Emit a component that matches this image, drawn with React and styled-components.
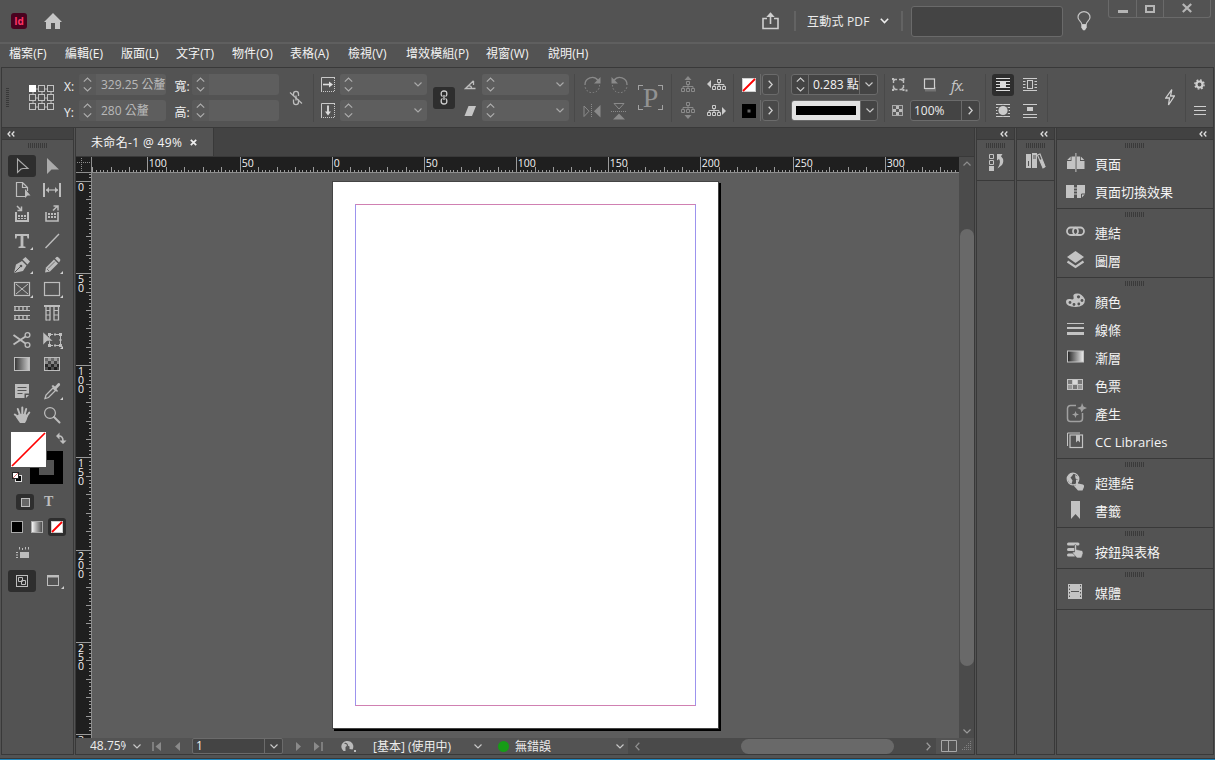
import React from 'react';
import styled, { createGlobalStyle, css } from 'styled-components';

const Global = createGlobalStyle`
  *, *::before, *::after { box-sizing: border-box; }
  body {
    margin: 0;
    background: #535353;
    color: #f0f0f0;
    font-family: 'Open Sans', 'Noto Sans CJK TC', sans-serif;
    font-size: 12px;
    overflow: hidden;
  }
  svg { display: block; flex: none; }
`;

const line = '#393939';

/* ---------- shell ---------- */
const Window = styled.div`
  width: 1215px;
  height: 760px;
  display: flex;
  flex-direction: column;
  background: #535353;
`;
const TitleBar = styled.header`
  height: 44px;
  flex: none;
  display: flex;
  align-items: center;
  padding: 0 3px 0 11px;
  border-bottom: 2px solid #5f5f5f;
`;
const Logo = styled.div`
  width: 16px;
  height: 16px;
  border-radius: 3px;
  background: #49021f;
  color: #ff3366;
  font: 700 10px/16px 'Open Sans', sans-serif;
  text-align: center;
`;
const TitleItem = styled.div`
  margin-left: ${p => p.$gap}px;
`;
const TitleRule = styled.div`
  width: 2px;
  height: 20px;
  background: #636363;
  margin-left: ${p => p.$gap}px;
`;
const Workspace = styled.div`
  width: 64px;
  margin-left: 11px;
  white-space: nowrap;
  font-size: 12px;
  letter-spacing: 0.2px;
  color: #ececec;
`;
const Search = styled.div`
  width: 152px;
  height: 31px;
  margin-left: 8px;
  background: #444;
  border: 1px solid #6a6a6a;
  border-radius: 3px;
`;
const Controls = styled.div`
  align-self: flex-start;
  display: flex;
  width: 103px;
  height: 18px;
  margin-left: 17px;
  border: 1px solid #6a6a6a;
  border-top: 0;
  border-radius: 0 0 3px 3px;
`;
const ControlButton = styled.div`
  width: ${p => p.$w}px;
  display: flex;
  justify-content: center;
  border-right: ${p => (p.$last ? '0' : '1px solid #6a6a6a')};
`;
const MenuBar = styled.nav`
  height: 23px;
  flex: none;
  display: flex;
  padding-left: 9px;
  line-height: 20px;
`;
const MenuItem = styled.div`
  width: ${p => p.$w}px;
  white-space: nowrap;
  letter-spacing: 0.08px;
  color: #f4f4f4;
`;

/* ---------- control strip ---------- */
const Strip = styled.div`
  height: 61px;
  flex: none;
  display: flex;
  margin-left: 1px;
  margin-right: 1px;
  border: 1px solid ${line};
  padding-top: 6px;
`;
const Col = styled.div`
  width: ${p => p.$w}px;
  margin-left: ${p => p.$gap}px;
  padding-top: ${p => p.$down || 0}px;
  height: 47px;
  flex: none;
  display: flex;
  flex-direction: column;
  justify-content: ${p => (p.$mid ? 'center' : 'flex-start')};
  gap: 5px;
`;
const Cell = styled.div`
  height: 21px;
  flex: none;
  display: flex;
  align-items: center;
  justify-content: ${p => p.$align || 'center'};
  white-space: nowrap;
  gap: ${p => p.$gap || 0}px;
`;
const Rule = styled.div`
  width: 1px;
  height: 48px;
  flex: none;
  margin-left: ${p => p.$gap}px;
  background: #494949;
`;
const Grip = styled.div`
  ${p =>
    p.$vertical
      ? css`width: 3px; height: 19px; background: repeating-linear-gradient(to bottom, #383838 0 1px, transparent 1px 2px);`
      : css`width: 19px; height: 5px; background: repeating-linear-gradient(to right, #3a3a3a 0 1px, transparent 1px 2px);`}
`;
const Field = styled.div`
  height: 21px;
  display: flex;
  align-items: center;
  overflow: hidden;
  border-radius: 3px;
  background: ${p => (p.$live ? '#444' : '#5e5e5e')};
  border: ${p => (p.$live ? '1px solid #6b6b6b' : '0')};
  color: ${p => (p.$live ? '#f4f4f4' : '#b9b9b9')};
`;
const Spin = styled.div`
  width: 17px;
  align-self: stretch;
  flex: none;
  display: flex;
  align-items: center;
  justify-content: center;
  background: ${p => (p.$plain ? 'transparent' : p.$flat ? '#5e5e5e' : '#595959')};
  border-right: ${p => (p.$plain ? '1px solid #6b6b6b' : '0')};
`;
const Value = styled.div`
  flex: 1;
  min-width: 0;
  overflow: hidden;
  white-space: nowrap;
  padding-left: ${p => p.$pad || 0}px;
  line-height: ${p => p.$lh || 19}px;
`;
const Drop = styled.div`
  width: 18px;
  align-self: stretch;
  flex: none;
  display: flex;
  align-items: center;
  justify-content: center;
  border-left: ${p => (p.$edge ? '1px solid #6b6b6b' : '0')};
`;
const Arrow = styled.div`
  height: 21px;
  display: flex;
  padding-left: 1px;
  border-left: 1px solid #6b6b6b;
`;
const ArrowBox = styled.div`
  width: 17px;
  display: flex;
  align-items: center;
  justify-content: center;
  background: #494949;
  border: 1px solid #6b6b6b;
  border-radius: 3px;
`;
const StrokeSample = styled.div`
  width: 68px;
  height: 19px;
  flex: none;
  background: #e2e2e2;
  padding: 5px 4px;
`;
const StrokeInk = styled.div`
  height: 9px;
  background: #000;
`;
const Toggle = styled.div`
  width: ${p => p.$w}px;
  height: ${p => p.$h}px;
  flex: none;
  display: flex;
  align-items: center;
  justify-content: center;
  border-radius: 3px;
  background: #2e2e2e;
`;

/* ---------- body ---------- */
const Body = styled.main`
  height: 627px;
  flex: none;
  display: flex;
  gap: 1px;
  padding: 0 1px;
`;
const Panel = styled.section`
  width: ${p => p.$w}px;
  flex: none;
  display: flex;
  flex-direction: column;
  border: 1px solid ${line};
  border-top: 0;
`;
const PanelHead = styled.div`
  height: 12px;
  flex: none;
  display: flex;
  align-items: center;
  justify-content: ${p => (p.$right ? 'flex-end' : 'flex-start')};
  padding: 0 6px 0 5px;
  background: #424242;
  border-bottom: 1px solid ${line};
`;
const ToolGrip = styled.div`
  height: 14px;
  display: flex;
  justify-content: center;
  padding-top: 3px;
`;
const ToolGroup = styled.div`
  display: grid;
  grid-template-columns: 30px 30px;
  grid-auto-rows: 24px;
  margin: 0 0 ${p => p.$after}px 5px;
`;
const Tool = styled.div`
  display: flex;
  align-items: center;
  justify-content: center;
`;
const FillStroke = styled.div`
  margin: 5px 0 0 9px;
`;
const ModeRow = styled.div`
  display: flex;
  align-items: center;
  height: ${p => p.$h}px;
  padding-left: ${p => p.$left}px;
  gap: ${p => p.$gap || 0}px;
`;
const SwatchPair = styled.div`
  display: flex;
  gap: 8px;
`;

const Doc = styled.section`
  width: 900px;
  flex: none;
  display: flex;
  flex-direction: column;
  border: 1px solid ${line};
  border-top: 0;
`;
const Tabs = styled.div`
  height: 29px;
  flex: none;
  background: #434343;
  border-bottom: 1px solid ${line};
  display: flex;
`;
const Tab = styled.div`
  width: 138px;
  padding-left: 15px;
  background: #535353;
  border-right: 1px solid ${line};
  display: flex;
  align-items: center;
  white-space: nowrap;
`;
const TabTitle = styled.span`
  width: 99px;
  letter-spacing: 0.35px;
  color: #f5f5f5;
`;
const Stage = styled.div`
  height: 581px;
  flex: none;
  display: grid;
  grid-template: 16px 565px / 16px 867px 15px;
`;
const RulerBox = styled.div`
  grid-column: ${p => (p.$wide ? '1 / 3' : '1')};
  background: #1f1f1f;
  overflow: hidden;
`;
const Canvas = styled.div`
  position: relative;
  background: #5d5d5d;
  overflow: hidden;
`;
const Page = styled.div`
  position: absolute;
  left: 240px;
  top: 8px;
  width: 387px;
  height: 548px;
  background: #fff;
  border: 1px solid #444;
  box-shadow: 2px 2px 0 #000;
  padding: 22px;
`;
const Margins = styled.div`
  width: 341px;
  height: 502px;
  border: 1px solid #d080b2;
  border-left-color: #9c93ee;
  border-right-color: #9c93ee;
`;
const VScroll = styled.div`
  grid-column: 3;
  grid-row: 1 / 3;
  background: #4b4b4b;
  display: flex;
  flex-direction: column;
  align-items: center;
  justify-content: space-between;
  padding: 4px 0;
`;
const VThumb = styled.div`
  width: 14px;
  height: 437px;
  margin: 63px 0 auto;
  border-radius: 7px;
  background: #696969;
`;
const Status = styled.div`
  height: 16px;
  flex: none;
  display: flex;
  align-items: center;
  line-height: 16px;
  white-space: nowrap;
`;
const Slot = styled.div`
  width: ${p => p.$w}px;
  flex: none;
  margin-left: ${p => p.$gap || 0}px;
  padding-top: ${p => p.$down || 0}px;
  overflow: ${p => (p.$clip ? 'hidden' : 'visible')};
  color: #ececec;
`;
const PageNo = styled.div`
  width: 91px;
  height: 16px;
  flex: none;
  margin-left: 12px;
  display: flex;
  align-items: center;
  background: #444;
  border: 1px solid #6b6b6b;
  border-radius: 2px;
`;
const Dot = styled.div`
  width: 11px;
  height: 11px;
  flex: none;
  border-radius: 50%;
  background: #169c16;
  margin-left: 16px;
`;
const HScroll = styled.div`
  width: 308px;
  height: 16px;
  flex: none;
  margin-left: 4px;
  background: #4a4a4a;
  display: flex;
  align-items: center;
  justify-content: space-between;
  padding: 0 5px 0 7px;
`;
const HThumb = styled.div`
  width: 153px;
  height: 15px;
  border-radius: 8px;
  background: #696969;
  margin: 0 auto 0 101px;
`;

/* ---------- docks ---------- */
const DockGroup = styled.div`
  border-bottom: 1px solid ${line};
  padding-bottom: 2px;
`;
const DockGrip = styled.div`
  height: 10px;
  padding: 3px 1px 0 0;
  display: flex;
  justify-content: center;
`;
const DockRow = styled.div`
  height: 28px;
  display: flex;
  align-items: center;
  padding-left: 9px;
`;
const DockIcon = styled.div`
  width: 22px;
  margin: -3px 7px 0 0;
  display: flex;
`;
const DockLabel = styled.span`
  font-size: 13px;
  line-height: 20px;
  color: #f4f4f4;
  white-space: nowrap;
`;
const IconOnly = styled.div`
  height: 28px;
  display: flex;
  justify-content: center;
  padding-top: 3px;
`;
const Foot = styled.div`
  height: 5px;
  flex: none;
  border-bottom: 1px solid #1e86bd;
  box-shadow: inset 0 -1px 0 ${line};
`;

/* ---------- icons ---------- */
const Svg = ({ w, h, children, ...rest }) => (
  <svg width={w} height={h} viewBox={`0 0 ${w} ${h}`} fill="none" stroke="none" {...rest}>
    {children}
  </svg>
);
const G = '#bdbdbd';
const D = '#8a8a8a';

const Down = ({ c = '#c8c8c8' }) => (
  <Svg w={8} h={5}><path d="M.5 .5 4 4 7.5 .5" stroke={c} strokeWidth="1.2" /></Svg>
);
const Right = ({ c = '#d0d0d0' }) => (
  <Svg w={5} h={9}><path d="M.7 .7 4.2 4.5 .7 8.3" stroke={c} strokeWidth="1.3" /></Svg>
);
const Left = ({ c }) => (
  <Svg w={5} h={9}><path d="M4.3 .7 .8 4.5 4.3 8.3" stroke={c} strokeWidth="1.3" /></Svg>
);
const UpDown = ({ c = '#adadad' }) => (
  <Svg w={9} h={15}><path d="M.8 4.6 4.5 1 8.2 4.6M.8 10.4 4.5 14 8.2 10.4" stroke={c} strokeWidth="1.2" /></Svg>
);
const Collapse = () => (
  <Svg w={8} h={6}><path d="M3.3 .5 1 3 3.3 5.5M7.3 .5 5 3 7.3 5.5" stroke="#dedede" strokeWidth="1.3" /></Svg>
);
const Home = () => (
  <Svg w={18} h={16}><path d="M9 0 18 9H16V16H11V10H7V16H2V9H0Z" fill="#c6c6c6" /></Svg>
);
const Share = () => (
  <Svg w={17} h={18}>
    <path d="M5 6.5H1V16.5H16V6.5H12" stroke="#cfcfcf" strokeWidth="1.6" />
    <path d="M8.5 12V2" stroke="#cfcfcf" strokeWidth="1.6" />
    <path d="M4.3 5 8.5 .3 12.7 5Z" fill="#cfcfcf" />
  </Svg>
);
const Bulb = () => (
  <Svg w={14} h={20}>
    <path d="M4.8 13.5C4.8 10.5 1 9.8 1 6.3A6 5.700 0 0 1 13 6.3C13 9.8 9.200 10.5 9.200 13.5Z" stroke="#c4c4c4" strokeWidth="1.2" />
    <path d="M4.3 14H9.7V16.5L8 19.3H6L4.3 16.500Z" fill="#d0d0d0" />
  </Svg>
);
const RefPoint = () => (
  <Svg w={26} h={26}>
    <path d="M4 4H22V22H4ZM4 13H22M13 4V22" stroke="#b5b5b5" />
    {[0, 9, 18].map(y => [0, 9, 18].map(x => (
      <rect key={`${x}-${y}`} x={x + 0.5} y={y + 0.5} width="6" height="6"
        fill={x + y === 0 ? '#fff' : '#535353'} stroke={x + y === 0 ? '#fff' : '#c2c2c2'} />
    )))}
  </Svg>
);
const Unlink = () => (
  <Svg w={14} h={16}>
    <path d="M4.500 6V4A2.500 2.600 0 0 1 9.500 4V6M4.500 9.500V12A2.500 2.600 0 0 0 9.500 12V9.500M7 5.500V10.500" stroke={G} strokeWidth="1.3" />
    <path d="M1 2.5 13 13.5" stroke={G} strokeWidth="1.2" />
  </Svg>
);
const LinkOn = () => (
  <Svg w={8} h={15}>
    <path d="M2.500 6.500Q1.200 6 1.200 4.500V3.500Q1.200 1 4 1T6.800 3.500V4.500Q6.800 6 5.500 6.500M2.500 8.500Q1.200 9 1.200 10.500V11.500Q1.200 14 4 14T6.800 11.500V10.500Q6.800 9 5.500 8.500M4 5V10" stroke="#d0d0d0" strokeWidth="1.3" />
  </Svg>
);
const ScaleX = () => (
  <Svg w={14} h={15}>
    <path d="M14 .5H.5V14.5" stroke="#c8c8c8" />
    <path d="M13.5 1V15M0 14.5H14" stroke="#c8c8c8" strokeDasharray="1 1" />
    <path d="M2 7.5H9" stroke="#ddd" strokeWidth="1.6" /><path d="M8 4.5 12 7.5 8 10.5Z" fill="#ddd" />
  </Svg>
);
const ScaleY = () => (
  <Svg w={14} h={15}>
    <path d="M14 .5H.5V14.5" stroke="#c8c8c8" />
    <path d="M13.5 1V15M0 14.5H14" stroke="#c8c8c8" strokeDasharray="1 1" />
    <path d="M7 2.5V9" stroke="#ddd" strokeWidth="1.8" /><path d="M4 8.5 7 12.5 10 8.5Z" fill="#ddd" />
  </Svg>
);
const Angle = () => (
  <Svg w={12} h={10}><path d="M9.500 .8 1.5 8.500H11.5M4.5 6C6.5 5.500 7.5 6.500 7.5 8.500M9.500 1V5" stroke={G} strokeWidth="1.3" /></Svg>
);
const Shear = () => (
  <Svg w={12} h={10}><path d="M4.5 0H12L8 10H.5Z" fill="#c4c4c4" /></Svg>
);
const Rotate = ({ flip }) => (
  <Svg w={17} h={17} transform={flip ? 'scale(-1 1)' : undefined}>
    <path d="M1 9A7.2 7.2 0 0 1 14 4.5" stroke={D} strokeWidth="1.3" />
    <path d="M16.5 1V7.5H10Z" fill={D} />
    <path d="M15.5 9A7.2 7.2 0 0 1 1 10" stroke={D} strokeDasharray="1.5 1.8" />
  </Svg>
);
const FlipH = () => (
  <Svg w={18} h={14}>
    <path d="M1 2V12.5L6 7.2Z" stroke={D} /><path d="M17.5 1V13.5L11 7.2Z" fill={D} />
    <path d="M8.5 0V14" stroke={D} strokeDasharray="1 1" />
  </Svg>
);
const FlipV = () => (
  <Svg w={16} h={18}>
    <path d="M3 1.5H13L8 7Z" stroke={D} /><path d="M2 17.5H14L8 11.5Z" fill={D} />
    <path d="M0 9.5H16" stroke={D} strokeDasharray="1 1" />
  </Svg>
);
const PreviewBox = styled.div`
  width: 25px;
  height: 25px;
  display: grid;
  place-items: center;
  font: 28px/24px 'Liberation Serif', serif;
  color: #929292;
  background:
    linear-gradient(#a2a2a2, #a2a2a2) 0 0 / 5px 1px, linear-gradient(#a2a2a2, #a2a2a2) 0 0 / 1px 5px,
    linear-gradient(#a2a2a2, #a2a2a2) 100% 0 / 5px 1px, linear-gradient(#a2a2a2, #a2a2a2) 100% 0 / 1px 5px,
    linear-gradient(#a2a2a2, #a2a2a2) 0 100% / 5px 1px, linear-gradient(#a2a2a2, #a2a2a2) 0 100% / 1px 5px,
    linear-gradient(#a2a2a2, #a2a2a2) 100% 100% / 5px 1px, linear-gradient(#a2a2a2, #a2a2a2) 100% 100% / 1px 5px;
  background-repeat: no-repeat;
`;
const Tree = ({ y = 0, x = 0, c }) => (
  <g transform={`translate(${x} ${y})`} stroke={c}>
    <path d="M5.500 .5H8.500V3.500H5.500ZM7 4V7M2 8V5.500H12V8M.5 7.500H3.500V10.500H.5ZM5.500 7.500H8.500V10.500H5.500ZM10.500 7.500H13.500V10.500H10.500Z" />
  </g>
);
const TreeUp = () => <Svg w={14} h={17}><path d="M3.5 4 7 0 10.5 4Z" fill={D} /><Tree y={5} c={D} /></Svg>;
const TreeDown = () => <Svg w={14} h={17}><Tree c={D} /><path d="M3.5 13 7 17 10.5 13Z" fill={D} /></Svg>;
const TreePrev = () => <Svg w={19} h={12}><path d="M4 1V9L0 5Z" fill="#ccc" /><Tree x={5} c="#ccc" /></Svg>;
const TreeNext = () => <Svg w={19} h={12}><Tree c="#ccc" /><path d="M15 2V10L19 6Z" fill="#ccc" /></Svg>;
const NoneSwatch = ({ s = 14 }) => (
  <Svg w={s} h={s}>
    <rect x=".5" y=".5" width={s - 1} height={s - 1} fill="#fff" stroke="#cfcfcf" />
    <path d={`M1 ${s - 1} ${s - 1} 1`} stroke="#f00" strokeWidth="1.8" />
  </Svg>
);
const BlackSwatch = () => (
  <Svg w={14} h={14}><rect width="14" height="14" fill="#000" /><rect x="5.5" y="5.5" width="3" height="3" fill="#666" /></Svg>
);
const Corner = () => (
  <Svg w={17} h={14}>
    <path d="M1.500 5V2.500Q2.500 2.500 2.500 1.500H5M7 1.500H9.500Q9.500 2.500 11.500 2.500V5M11.500 7V9.500Q10 10 10 11.500H7.500M5.500 11.500H3Q3 10 1.500 10V7.500" stroke={G} strokeWidth="1.400" />
    <path d="M0 0H2V2H0ZM10.500 0H12.500V2H10.500ZM0 11H2V13H0ZM10.500 11H12.500V13H10.500Z" fill={G} />
    <rect x="13.500" y="11.500" width="2" height="2" fill={G} />
  </Svg>
);
const Shadow = () => (
  <Svg w={14} h={14}>
    <rect x="2" y="9" width="11" height="4.5" fill="#808080" opacity=".7" />
    <rect x="1.5" y="1" width="10" height="9.5" fill="#535353" stroke="#d0d0d0" strokeWidth="1.2" />
  </Svg>
);
const Fx = styled.span`
  font: italic 15px/18px 'Open Sans', sans-serif;
  letter-spacing: -0.8px;
  color: #c6c6c6;
`;
const Checker = () => (
  <Svg w={11} h={11}>
    <rect x=".5" y=".5" width="10" height="10" fill="#5a5a5a" stroke="#a8a8a8" />
    {[0, 1, 2].map(r => [0, 1, 2].map(c => (r + c) % 2 === 1 && (
      <rect key={`${r}${c}`} x={1 + c * 3} y={1 + r * 3} width="3" height="3" fill="#bbb" />
    )))}
  </Svg>
);
const wrapLines = 'M0 .5H14M0 3.5H14M0 6.5H14M0 9.5H14M0 12.5H14';
const WrapNone = () => (
  <Svg w={14} h={14}><path d={wrapLines} stroke="#ddd" /><rect x="4" y="3" width="6" height="6" fill="#ddd" /></Svg>
);
const WrapBox = () => (
  <Svg w={14} h={14}><path d={wrapLines} stroke="#ccc" /><rect x="2.5" y="2" width="9" height="9.5" fill="#535353" /><rect x="4.5" y="2.5" width="5" height="8" stroke="#ccc" /></Svg>
);
const WrapShape = () => (
  <Svg w={14} h={14}><path d={wrapLines} stroke="#ccc" /><circle cx="7" cy="6.5" r="5.8" fill="#535353" /><circle cx="7" cy="6.5" r="4.6" fill="#ccc" /></Svg>
);
const WrapJump = () => (
  <Svg w={14} h={14}><path d="M0 .5H14M0 10.5H14M0 13.5H14" stroke="#ccc" /><rect x="4" y="3" width="6" height="4" fill="#ccc" /></Svg>
);
const Bolt = () => (
  <Svg w={10} h={17}><path d="M6.800 .5 .8 9H4.500L3.500 16 9.400 7H5.500Z" fill="#535353" stroke="#cfcfcf" strokeWidth="1.300" /></Svg>
);
const Gear = () => (
  <Svg w={11} h={11}>
    <circle cx="5.5" cy="5.5" r="3" stroke="#cfcfcf" strokeWidth="2.2" />
    <circle cx="5.5" cy="5.5" r="4.6" stroke="#cfcfcf" strokeWidth="1.5" strokeDasharray="1.8 1.81" />
  </Svg>
);
const Burger = () => <Svg w={12} h={9}><path d="M0 .5H12M0 4.5H12M0 8.5H12" stroke="#cfcfcf" /></Svg>;
const Close = () => <Svg w={7} h={7}><path d="M.8 .8 6.2 6.2M6.2 .8 .8 6.2" stroke="#eee" strokeWidth="1.7" /></Svg>;

const Flyout = () => <path d="M22 17V20H19Z" fill="#d0d0d0" />;
const T = ({ children, more }) => <Svg w={22} h={22}>{children}{more && <Flyout />}</Svg>;

const tools = {
  select: <T><path d="M6.5 4V17.5L10 14 12 13.500H17Z" stroke="#ababab" strokeWidth="1.1" /></T>,
  direct: <T><path d="M6 3V19L10.5 14.5H18Z" fill="#ababab" /></T>,
  page: (
    <T>
      <path d="M12 3.5H5.5V17.5H14M11.5 3.5 16.5 8.5V12M11.5 3.5V8.5H16.5" stroke={G} strokeWidth="1.2" />
      <path d="M14 10V19L16.5 16.5H19.5Z" fill={G} />
    </T>
  ),
  gap: (
    <T>
      <path d="M3 4V18M19 4V18" stroke={G} strokeWidth="2" /><path d="M5 11H17" stroke={G} strokeWidth="1.2" />
      <path d="M8 8V14L5 11ZM14 8V14L17 11Z" fill={G} />
    </T>
  ),
  collect: (
    <T>
      <path d="M5 9V18H17V9" stroke={G} strokeWidth="2" /><path d="M7 12H9V14H7ZM10 12H12V14H10ZM13 12H15V14H13ZM7 15H9V16H7ZM10 15H12V16H10ZM13 15H15V16H13Z" fill={G} />
      <path d="M6 3 10 7M10.5 3.5V7.500H6.500" stroke={G} strokeWidth="1.5" />
    </T>
  ),
  place: (
    <T>
      <path d="M5 9V18H17V9" stroke={G} strokeWidth="1.6" /><path d="M7 10H9V12H7ZM10 10H12V12H10ZM13 10H15V12H13ZM7 13H9V15H7ZM10 13H12V15H10ZM13 13H15V15H13Z" fill={G} />
      <path d="M12 7.5 16 3.5M12.5 3H17V7.5" stroke={G} strokeWidth="1.5" />
    </T>
  ),
  type: <T more><path d="M4 4H18V8.5H16.5L16 6H12.4V16.3L14.5 16.7V18H7.500V16.700L9.600 16.300V6H6L5.500 8.500H4Z" fill={G} /></T>,
  line: <T><path d="M4.5 18 18 4" stroke={G} strokeWidth="1.4" /></T>,
  pen: (
    <T more>
      <path d="M3 19 5 10.5 11 7 15.500 11.500 12 17Z" fill={G} /><path d="M11.5 5.5 14.5 3 19 7.5 16.5 10.5Z" fill={G} />
      <path d="M3.500 18.500 9.500 12.500" stroke="#535353" /><circle cx="10" cy="12" r="1.3" fill="#535353" />
    </T>
  ),
  pencil: (
    <T more>
      <path d="M4 18.5 5 13.5 13 5.5 17 9.5 9 17.5Z" fill={G} /><path d="M14 4.5 15.5 3Q16.5 2.5 17.5 3.5L19 5Q19.800 6 19 7L18 8.500Z" fill={G} />
      <path d="M7 14.5 14 7.5M6 15 8 17" stroke="#6d6d6d" />
    </T>
  ),
  frame: <T more><rect x="3.5" y="4.5" width="15" height="13" stroke={G} strokeWidth="1.2" /><path d="M5 6 17 16M17 6 5 16" stroke={G} /></T>,
  rect: <T more><rect x="3.5" y="4.5" width="15" height="13" stroke={G} strokeWidth="1.2" /></T>,
  rows: (
    <T>
      <path d="M3 4.500H19M3 8.500H19M3 13.500H19M3 17.500H19" stroke={G} />
      <path d="M4 4V9M8 4V9M12 4V9M16 4V9M4 13V18M8 13V18M12 13V18M16 13V18" stroke={G} strokeWidth="1.400" />
    </T>
  ),
  cols: (
    <T>
      <path d="M3 4H19" stroke={G} strokeWidth="2" /><path d="M5 4V18.500M9 4V18.500M13 4V18.500M17.500 4V18.500" stroke={G} strokeWidth="1.300" />
      <path d="M5 8.500H9M5 13H9M5 18H9M13 8.500H17M13 13H17M13 18H17" stroke={G} strokeWidth="1.200" />
    </T>
  ),
  scissors: (
    <T>
      <circle cx="16.500" cy="6" r="2.400" stroke={G} strokeWidth="1.300" /><circle cx="16.500" cy="16" r="2.400" stroke={G} strokeWidth="1.300" />
      <path d="M2.500 6 14.500 14.500M2.500 15.500 14.500 7.500" stroke={G} strokeWidth="1.900" />
    </T>
  ),
  transform: (
    <T more>
      <rect x="8.500" y="5.500" width="11" height="11" stroke={G} />
      <path d="M12 4.500H14V6.500H12ZM12 15.500H14V17.500H12Z" fill="#535353" />
      <path d="M7 4H10V7H7ZM18 4H21V7H18ZM18 15H21V18H18ZM7 15H10V18H7ZM13 4.500H15V6.500H13ZM13 15.500H15V17.500H13ZM18.500 10H20.500V12H18.500Z" fill={G} />
      <path d="M2 3V16L6 12H12Z" fill={G} stroke="#535353" strokeWidth=".5" />
    </T>
  ),
  gradient: (
    <T>
      <defs><linearGradient id="tg"><stop offset="0" stopColor="#333" /><stop offset="1" stopColor="#ccc" /></linearGradient></defs>
      <rect x="3.500" y="4.500" width="15" height="13" fill="url(#tg)" stroke={G} />
    </T>
  ),
  feather: (
    <T>
      <rect x="3" y="4" width="16" height="14" fill="#2a2a2a" />
      {[0, 1, 2, 3].map(r => [0, 1, 2, 3, 4].map(c => (
        <rect key={`${r}${c}`} x={4 + c * 3} y={5 + r * 3} width="3" height="3"
          fill={((r + c) % 2 ? ['#9a9a9a', '#8a8a8a', '#6c6c6c', '#4c4c4c'] : ['#6a6a6a', '#444', '#2a2a2a', '#1c1c1c'])[r]} />
      )))}
      <rect x="3.500" y="4.500" width="15" height="13" stroke={G} />
    </T>
  ),
  note: <T><path d="M4 4H18V13.5H13.5V18H4ZM15 15H18L15 18Z" fill={G} /><path d="M6.5 7.5H15.5M6.5 10.5H15.5M6.5 13.5H11.5" stroke="#555" /></T>,
  dropper: (
    <T more>
      <path d="M4 18.500 5 15 12 8 14.500 10.500 7.500 17.500Z" stroke={G} strokeWidth="1.300" />
      <path d="M10.500 6 12 5 14 6.500 17 3.300Q18.500 2.500 19 4T18.500 5.800L15.500 9 17 11 16 12Z" fill={G} />
    </T>
  ),
  hand: (
    <T>
      <path d="M8 13.500 3.800 10.500M9 11 6.800 5M11.300 10V3.500M13.500 11 15.200 5M15.500 12.500 18.300 8.500" stroke={G} strokeWidth="2" strokeLinecap="round" />
      <path d="M6.500 11.500 8 10H14.500L17 11.500Q16 16 14 19H9Q7.500 17 4.500 12.500Z" fill={G} />
    </T>
  ),
  zoom: <T><circle cx="9" cy="9" r="5.400" stroke={G} strokeWidth="1.200" /><path d="M13 13 18.500 18.500" stroke={G} strokeWidth="2" strokeLinecap="round" /></T>,
};

const FillStrokeArt = () => (
  <Svg w={56} h={53}>
    <path d="M19 19H52V52H19ZM28 28V43H43V28Z" fill="#000" fillRule="evenodd" />
    <rect width="36" height="36" fill="#535353" /><rect width="35" height="35" fill="#fff" />
    <path d="M1 34 34 1" stroke="#f00" strokeWidth="1.700" />
    <path d="M48 4Q52 4 52 9" stroke={G} strokeWidth="1.600" />
    <path d="M48.500 .5V7.500L45 4ZM48.500 8.500H55.500L52 12Z" fill={G} />
    <rect x="4.500" y="43.500" width="6" height="6" fill="#000" stroke="#ddd" /><rect x="1.500" y="40.500" width="6" height="6" fill="#fff" stroke="#222" /><path d="M2 46 7 41" stroke="#d77" />
  </Svg>
);
const FillSmall = () => <Svg w={9} h={9}><rect x=".5" y=".5" width="8" height="8" fill="#666" stroke={G} /></Svg>;
const TypeSmall = styled.span`
  font: 700 14px/16px 'Liberation Serif', serif;
  color: #bdbdbd;
`;
const Solid = () => <Svg w={12} h={12}><rect x=".5" y=".5" width="11" height="11" fill="#000" stroke="#aaa" /></Svg>;
const Grad = () => (
  <Svg w={12} h={12}>
    <defs><linearGradient id="sg"><stop offset="0" stopColor="#fff" /><stop offset="1" stopColor="#444" /></linearGradient></defs>
    <rect x=".5" y=".5" width="11" height="11" fill="url(#sg)" stroke="#aaa" />
  </Svg>
);
const Tips = () => (
  <Svg w={14} h={12}>
    <rect x="4" y="5" width="9" height="6" fill={G} />
    <path d="M3.500 0V2.500M6.500 1V3M9.500 0V2.500M12.500 0V2.500M0 5.500H2M0 8H2M0 10.500H2" stroke={G} />
  </Svg>
);
const ViewNormal = () => (
  <Svg w={12} h={12}><rect x=".5" y=".5" width="11" height="11" stroke={G} /><path d="M2.500 2.500H6.500V6.500H2.500ZM5.500 5.500H9.500V9.500H5.500Z" stroke={G} /></Svg>
);
const ScreenMode = () => (
  <Svg w={18} h={15}><rect x="1.5" y="1.5" width="11" height="10" stroke={G} /><path d="M1 2.5H13" stroke={G} strokeWidth="2" /><path d="M18 12V15H15Z" fill="#d0d0d0" /></Svg>
);

const K = '#c3c3c3';
const dockIcons = {
  pages: (
    <Svg w={20} h={19}>
      <path d="M1 16V8H5.500V3.500H9V16ZM10.800 16V3.500H14V8H18.500V16Z" fill={K} />
      <path d="M1.200 7 4.700 3.500V7ZM18.300 7 14.800 3.500V7Z" fill={K} /><path d="M9.900 0V19" stroke={K} />
    </Svg>
  ),
  transitions: <Svg w={20} h={14}><path d="M0 1H8V14H0ZM11 1H19V10L15.5 14H11Z" fill={K} /><path d="M8 4H11M8 7H11M8 10H11" stroke={K} /><path d="M19 10H15.5V14" stroke="#535353" /></Svg>,
  links: <Svg w={20} h={11}><rect x="1" y="1.5" width="11" height="7.5" rx="3.7" stroke={K} strokeWidth="1.8" /><rect x="7" y="1.5" width="11" height="7.5" rx="3.7" stroke={K} strokeWidth="1.8" /></Svg>,
  layers: <Svg w={19} h={18}><path d="M9.5 0 18 6 9.5 12 1 6Z" fill={K} /><path d="M1.500 10.500 9.500 16 17.500 10.500" stroke={K} strokeWidth="2.2" /></Svg>,
  color: (
    <Svg w={20} h={15}>
      <path d="M7.500 4Q6.500 1 11 .6T19 6.500Q19 14 9.500 14Q0 13.500 0 9Q0 5.500 4 6Q8.500 7.500 7.500 4Z" fill={K} />
      <circle cx="4" cy="9.500" r="1.400" fill="#535353" /><circle cx="8" cy="11.500" r="1.400" fill="#535353" />
      <circle cx="12.800" cy="11" r="1.400" fill="#535353" /><circle cx="16" cy="7.500" r="1.400" fill="#535353" /><circle cx="12.500" cy="3.800" r="1.600" fill="#535353" />
    </Svg>
  ),
  stroke: <Svg w={19} h={14}><path d="M1 1.5H18" stroke={K} /><path d="M1 6H18" stroke={K} strokeWidth="2" /><path d="M1 11.5H18" stroke={K} strokeWidth="3" /></Svg>,
  gradient: (
    <Svg w={19} h={13}>
      <defs><linearGradient id="dg"><stop offset="0" stopColor="#222" /><stop offset="1" stopColor="#eee" /></linearGradient></defs>
      <rect x="1.5" y="1" width="16" height="11" fill="url(#dg)" stroke={K} />
    </Svg>
  ),
  swatches: (
    <Svg w={18} h={11}>
      <rect x="1" width="16" height="11" fill={K} />
      <path d="M2 1H6V5H2ZM12 1H16V5H12ZM7 6H11V10H7Z" fill="#777" /><path d="M7 1H11V5H7Z" fill="#d8d8d8" /><path d="M2 6H6V10H2ZM12 6H16V10H12Z" fill="#969696" />
    </Svg>
  ),
  generate: (
    <Svg w={21} h={20}>
      <path d="M10 2.500H4.500A3 3 0 0 0 1.500 5.500V15.500A3 3 0 0 0 4.500 18.500H13.500A3 3 0 0 0 16.500 15.500V10" stroke="#a0a0a0" strokeWidth="1.500" />
      <path d="M16 0 17.500 3.500 21 5 17.500 6.500 15.500 9.500 14.500 6.500 11 5 15 3.500ZM9.500 8 10.500 10.500 13 11.500 10.300 12.500 9.500 15 8.500 12.500 6 11.500 8.700 10.500Z" fill="#a0a0a0" />
    </Svg>
  ),
  libraries: <Svg w={18} h={17}><path d="M1.5 14V1H14" stroke={K} /><rect x="4" y="3" width="12.5" height="12.5" stroke={K} strokeWidth="1.2" /><path d="M10 3H14V10.5L12 8.5 10 10.5Z" fill={K} /></Svg>,
  hyperlinks: (
    <Svg w={19} h={19}>
      <circle cx="7" cy="7" r="5.800" stroke={K} strokeWidth="1.200" />
      <path d="M1 6 4 1.500 8 1 6 4 4.500 5.500 6.500 8.500 5.500 12 3 10.500ZM9 3 13 5V8L9.500 6.500Z" fill={K} />
      <path d="M10 8Q11.500 6.500 12 8.500V11.500L17 12.500Q18.500 13 18 15L16.500 18.500H12L8 14Q8.500 12.500 10 13.500Z" fill={K} />
    </Svg>
  ),
  bookmarks: <Svg w={18} h={18}><path d="M5 0H14V18L9.5 13 5 18Z" fill={K} /></Svg>,
  buttons: (
    <Svg w={20} h={17}>
      <path d="M2.500 2H12M2.500 7.500H9M2.500 13H8" stroke={K} strokeWidth="3" strokeLinecap="round" />
      <path d="M8.500 3Q10 2 10.500 3.500V7.500L15.500 8.500Q17.500 9 17 11.500L15.500 16H11L6.500 11Q7 9 8.500 10Z" fill={K} stroke="#535353" strokeWidth=".6" />
    </Svg>
  ),
  media: <Svg w={18} h={16}><rect x="2" y="0" width="14" height="15" fill={K} /><path d="M3.5 1V15M14.5 1V15" stroke="#535353" strokeDasharray="1.5 2" /><path d="M5 7.5H13" stroke="#555" /></Svg>,
};
const History = () => (
  <Svg w={16} h={18}>
    <path d="M1.5 1.5H5.5V5.5H1.5ZM1.5 7.5H5.5V11.5H1.5Z" stroke={K} /><rect x="1" y="13" width="5" height="5" fill={K} />
    <path d="M9 1H14.500L13 3.200Q17 7 14 12L9.500 15.500Q13.500 9.500 11 6L9 7.500Z" fill={K} />
  </Svg>
);
const Books = () => (
  <Svg w={20} h={16}>
    <path d="M0 1H5V15H0ZM6 0H11V15H6Z" fill={K} /><path d="M2.5 8V13M7 3H10M7 5H10" stroke="#535353" />
    <path d="M11.500 2 14 1 19 13.500 17 15Z" stroke={K} strokeWidth="1.100" /><path d="M13.500 7 16 6 19.500 14 17 15Z" fill={K} />
  </Svg>
);

/* ---------- rulers ---------- */
const Label = styled.text`
  font: 10.5px 'Open Sans', sans-serif;
  fill: #f2f2f2;
`;
const unit = 1.8432;
function HRuler() {
  const origin = 256.3;
  const marks = [];
  for (let v = -136; v <= 344; v += 2) {
    const x = Math.floor(origin + v * unit) + 0.5;
    if (x < 16 || x > 882) continue;
    const len = v % 50 === 0 ? 15 : v % 10 === 0 ? 5 : 2;
    marks.push(<path key={v} d={`M${x} ${15 - len}V15`} stroke="#9a9a9a" />);
  }
  return (
    <Svg w={883} h={16}>
      <path d="M0 15.5H883M15.5 0V16" stroke="#8d8d8d" />
      <path d="M1 5.5H15M5.5 1V15" stroke="#8d8d8d" strokeDasharray="1 1" />
      {marks}
      {[-100, -50, 0, 50, 100, 150, 200, 250, 300].map(v => (
        <Label key={v} x={Math.floor(origin + v * unit) + 1.7} y="10">{Math.abs(v)}</Label>
      ))}
    </Svg>
  );
}
function VRuler() {
  const origin = 8;
  const marks = [];
  const labels = [];
  for (let v = -4; v <= 304; v += 2) {
    const y = Math.round(origin + v * unit) + 0.5;
    if (y < 0 || y > 565) continue;
    const len = v % 50 === 0 ? 15 : v % 10 === 0 ? 5 : 2;
    marks.push(<path key={v} d={`M${15 - len} ${y}H15`} stroke="#9a9a9a" />);
  }
  [0, 50, 100, 150, 200, 250, 300].forEach(v => {
    const top = Math.round(origin + v * unit);
    String(v).split('').forEach((ch, i) => {
      const y = top + 10 + i * 9;
      if (y < 574) labels.push(<Label key={`${v}-${i}`} x="2" y={y}>{ch}</Label>);
    });
  });
  return (
    <Svg w={16} h={565}>
      <path d="M15.5 0V565" stroke="#8d8d8d" />
      {marks}
      {labels}
    </Svg>
  );
}

/* ---------- composites ---------- */
const NumberField = ({ children }) => (
  <Field><Spin><UpDown /></Spin><Value $pad={5}>{children}</Value></Field>
);
const ComboField = () => (
  <Field><Spin $flat><UpDown /></Spin><Value /><Drop><Down c="#a8a8a8" /></Drop></Field>
);
const Expand = () => <Arrow><ArrowBox><Right /></ArrowBox></Arrow>;

const menus = [
  ['檔案(F)', 56], ['編輯(E)', 56], ['版面(L)', 55], ['文字(T)', 56], ['物件(O)', 58],
  ['表格(A)', 58], ['檢視(V)', 58], ['增效模組(P)', 80], ['視窗(W)', 62], ['說明(H)', 60],
];
const groups = [
  [['pages', '頁面'], ['transitions', '頁面切換效果']],
  [['links', '連結'], ['layers', '圖層']],
  [['color', '顏色'], ['stroke', '線條'], ['gradient', '漸層'], ['swatches', '色票'], ['generate', '產生'], ['libraries', 'CC Libraries']],
  [['hyperlinks', '超連結'], ['bookmarks', '書籤']],
  [['buttons', '按鈕與表格']],
  [['media', '媒體']],
];

function ControlStrip() {
  return (
    <Strip>
      <Col $gap={4} $w={4} $mid><Grip $vertical /></Col>
      <Col $gap={19} $w={26} $mid><RefPoint /></Col>
      <Col $gap={9} $w={13} $down={2}><Cell $align="flex-start">X:</Cell><Cell $align="flex-start">Y:</Cell></Col>
      <Col $gap={2} $w={87}><NumberField>329.25 公釐</NumberField><NumberField>280 公釐</NumberField></Col>
      <Col $gap={8} $w={16} $down={1}><Cell>寬:</Cell><Cell>高:</Cell></Col>
      <Col $gap={2} $w={87}><NumberField /><NumberField /></Col>
      <Col $gap={10} $w={15} $mid><Unlink /></Col>
      <Rule $gap={9} />
      <Col $gap={6} $w={16}><Cell><ScaleX /></Cell><Cell><ScaleY /></Cell></Col>
      <Col $gap={4} $w={87}><ComboField /><ComboField /></Col>
      <Col $gap={6} $w={22} $mid><Toggle $w={22} $h={22}><LinkOn /></Toggle></Col>
      <Col $gap={9} $w={12}><Cell><Angle /></Cell><Cell><Shear /></Cell></Col>
      <Col $gap={6} $w={87}><ComboField /><ComboField /></Col>
      <Rule $gap={5} />
      <Col $gap={8} $w={18}><Cell><Rotate /></Cell><Cell><FlipH /></Cell></Col>
      <Col $gap={9} $w={18}><Cell><Rotate flip /></Cell><Cell><FlipV /></Cell></Col>
      <Col $gap={10} $w={26} $mid><PreviewBox>P</PreviewBox></Col>
      <Rule $gap={7} />
      <Col $gap={9} $w={14}><Cell><TreeUp /></Cell><Cell><TreeDown /></Cell></Col>
      <Col $gap={12} $w={19}><Cell><TreePrev /></Cell><Cell><TreeNext /></Cell></Col>
      <Rule $gap={7} />
      <Col $gap={8} $w={14}><Cell><NoneSwatch /></Cell><Cell><BlackSwatch /></Cell></Col>
      <Col $gap={4} $w={19}><Expand /><Expand /></Col>
      <Rule $gap={6} />
      <Col $gap={5} $w={87}>
        <Field $live><Spin $plain><UpDown c="#d0d0d0" /></Spin><Value $pad={4}>0.283 點</Value><Drop $edge><Down /></Drop></Field>
        <Field $live><StrokeSample><StrokeInk /></StrokeSample><Drop $edge><Down /></Drop></Field>
      </Col>
      <Rule $gap={6} />
      <Col $gap={7} $w={88}>
        <Cell $align="flex-start" $gap={14}><Corner /><Shadow /><Fx>fx.</Fx></Cell>
        <Cell $align="flex-start" $gap={7}>
          <Checker />
          <Field $live><Slot $w={50}><Value $pad={3}>100%</Value></Slot><Drop $edge><Right /></Drop></Field>
        </Cell>
      </Col>
      <Rule $gap={5} />
      <Col $gap={6} $w={22}><Cell><Toggle $w={22} $h={22}><WrapNone /></Toggle></Cell><Cell><WrapShape /></Cell></Col>
      <Col $gap={5} $w={22}><Cell><WrapBox /></Cell><Cell><WrapJump /></Cell></Col>
      <Rule $gap={6} />
      <Col $gap={117} $w={12} $mid><Bolt /></Col>
      <Rule $gap={8} />
      <Col $gap={7} $w={13}><Cell><Gear /></Cell><Cell><Burger /></Cell></Col>
    </Strip>
  );
}

function ToolPanel() {
  const row = names => names.map(n => (
    <Tool key={n}>{n === 'select' ? <Toggle $w={28} $h={22}>{tools[n]}</Toggle> : tools[n]}</Tool>
  ));
  return (
    <Panel $w={73}>
      <PanelHead><Collapse /></PanelHead>
      <ToolGrip><Grip /></ToolGrip>
      <ToolGroup $after={3}>{row(['select', 'direct', 'page', 'gap', 'collect', 'place'])}</ToolGroup>
      <ToolGroup $after={3}>{row(['type', 'line', 'pen', 'pencil', 'frame', 'rect', 'rows', 'cols'])}</ToolGroup>
      <ToolGroup $after={3}>{row(['scissors', 'transform', 'gradient', 'feather'])}</ToolGroup>
      <ToolGroup $after={0}>{row(['note', 'dropper', 'hand', 'zoom'])}</ToolGroup>
      <FillStroke><FillStrokeArt /></FillStroke>
      <ModeRow $h={34} $left={14} $gap={10}><Toggle $w={18} $h={16}><FillSmall /></Toggle><TypeSmall>T</TypeSmall></ModeRow>
      <ModeRow $h={16} $left={9} $gap={5}><SwatchPair><Solid /><Grad /></SwatchPair><Toggle $w={18} $h={18}><NoneSwatch s={12} /></Toggle></ModeRow>
      <ModeRow $h={36} $left={14}><Tips /></ModeRow>
      <ModeRow $h={20} $left={6} $gap={10}><Toggle $w={28} $h={22}><ViewNormal /></Toggle><ScreenMode /></ModeRow>
    </Panel>
  );
}

function Document() {
  return (
    <Doc>
      <Tabs><Tab><TabTitle>未命名-1 @ 49%</TabTitle><Close /></Tab></Tabs>
      <Stage>
        <RulerBox $wide><HRuler /></RulerBox>
        <RulerBox><VRuler /></RulerBox>
        <Canvas><Page><Margins /></Page></Canvas>
        <VScroll>
          <Svg w={8} h={5}><path d="M.5 4.5 4 1 7.5 4.5" stroke="#8e8e8e" strokeWidth="1.2" /></Svg>
          <VThumb />
          <Down c="#9a9a9a" />
        </VScroll>
      </Stage>
      <Status>
        <Slot $gap={14} $w={36} $clip>48.75%</Slot>
        <Slot $gap={7} $w={8}><Down /></Slot>
        <Slot $gap={11} $w={9}><Svg w={9} h={9}><path d="M1 0V9" stroke={D} strokeWidth="1.6" /><path d="M9 0V9L3.5 4.5Z" fill={D} /></Svg></Slot>
        <Slot $gap={14} $w={5}><Svg w={5} h={9}><path d="M5 0V9L0 4.5Z" fill={D} /></Svg></Slot>
        <PageNo><Value $pad={3} $lh={14}>1</Value><Drop $edge><Down /></Drop></PageNo>
        <Slot $gap={13} $w={5}><Svg w={5} h={9}><path d="M0 0V9L5 4.5Z" fill={D} /></Svg></Slot>
        <Slot $gap={13} $w={9}><Svg w={9} h={9}><path d="M8 0V9" stroke={D} strokeWidth="1.6" /><path d="M0 0V9L5.5 4.5Z" fill={D} /></Svg></Slot>
        <Slot $gap={17} $w={17}>
          <Svg w={17} h={13}>
            <path d="M3.500 11A6 5.700 0 1 1 12.500 9.500L9.500 9V6.500L7.500 5.500 5.500 7V11Z" fill="#bbb" />
            <path d="M4.500 3.500Q7.500 3 7.500 6V8" stroke="#5a5a5a" strokeWidth="1.200" />
            <rect x="14" y="10" width="2" height="2" fill={G} />
          </Svg>
        </Slot>
        <Slot $gap={16} $w={79} $down={1}>[基本] (使用中)</Slot>
        <Slot $gap={22} $w={8}><Down /></Slot>
        <Dot />
        <Slot $gap={6} $w={36} $down={1}>無錯誤</Slot>
        <Slot $gap={65} $w={8}><Down /></Slot>
        <HScroll><Left c="#8e8e8e" /><HThumb /><Right c="#9a9a9a" /></HScroll>
        <Slot $gap={5} $w={16}><Svg w={16} h={12}><path d="M.5 .5H15.5V11.5H.5ZM7.5 1V11" stroke="#a8a8a8" /></Svg></Slot>
        <Slot $gap={5} $w={10}>
          <Svg w={10} h={10}>
            {[0, 1, 2, 3, 4].map(r => [0, 1, 2, 3, 4].map(c => r + c >= 4 && <rect key={`${r}${c}`} x={c * 2} y={r * 2} width="1" height="1" fill="#808080" />))}
          </Svg>
        </Slot>
      </Status>
    </Doc>
  );
}

const MiniDock = ({ icon }) => (
  <Panel $w={39}>
    <PanelHead $right><Collapse /></PanelHead>
    <DockGroup><DockGrip><Grip /></DockGrip><IconOnly>{icon}</IconOnly></DockGroup>
  </Panel>
);

export default function App() {
  return (
    <Window>
      <Global />
      <TitleBar>
        <Logo>Id</Logo>
        <TitleItem $gap={17}><Home /></TitleItem>
        <TitleItem $gap={700}><Share /></TitleItem>
        <TitleRule $gap={15} />
        <Workspace>互動式 PDF</Workspace>
        <TitleItem $gap={9}><Svg w={9} h={6}><path d="M.8 .8 4.5 4.6 8.2 .8" stroke="#eee" strokeWidth="1.5" /></Svg></TitleItem>
        <TitleRule $gap={12} />
        <Search />
        <TitleItem $gap={14}><Bulb /></TitleItem>
        <Controls>
          <ControlButton $w={28}><Svg w={10} h={14}><path d="M0 11.5H10" stroke="#b5b5b5" strokeWidth="3" /></Svg></ControlButton>
          <ControlButton $w={27}><Svg w={10} h={14}><rect x="1" y="6" width="8" height="6" stroke="#b5b5b5" strokeWidth="2" /></Svg></ControlButton>
          <ControlButton $w={46} $last><Svg w={10} h={14}><path d="M.8 4 9.2 12M9.2 4 .8 12" stroke="#b5b5b5" strokeWidth="2.2" /></Svg></ControlButton>
        </Controls>
      </TitleBar>
      <MenuBar>{menus.map(([t, w]) => <MenuItem key={t} $w={w}>{t}</MenuItem>)}</MenuBar>
      <ControlStrip />
      <Body>
        <ToolPanel />
        <Document />
        <MiniDock icon={<History />} />
        <MiniDock icon={<Books />} />
        <Panel $w={158}>
          <PanelHead $right><Collapse /></PanelHead>
          {groups.map(g => (
            <DockGroup key={g[0][0]}>
              <DockGrip><Grip /></DockGrip>
              {g.map(([k, label]) => (
                <DockRow key={k}><DockIcon>{dockIcons[k]}</DockIcon><DockLabel>{label}</DockLabel></DockRow>
              ))}
            </DockGroup>
          ))}
        </Panel>
      </Body>
      <Foot />
    </Window>
  );
}
